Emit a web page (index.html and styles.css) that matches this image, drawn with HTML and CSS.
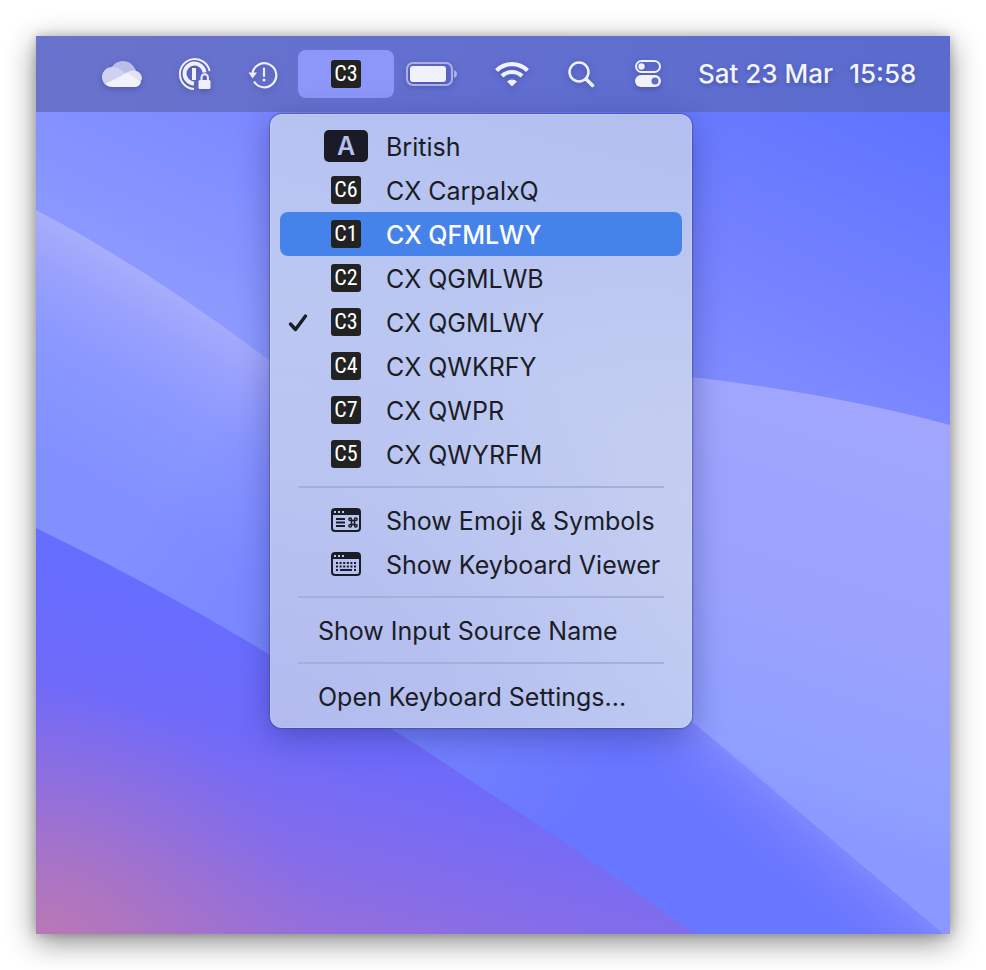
FILE: index.html
```html
<!DOCTYPE html>
<html lang="en">
<head>
<meta charset="utf-8">
<title>Input menu</title>
<link rel="stylesheet" href="styles.css">
</head>
<body>
<main class="desktop">
  <svg class="wallpaper" viewBox="36 36 914 898" preserveAspectRatio="none" aria-hidden="true">
    <defs>
      <linearGradient id="sky" gradientUnits="userSpaceOnUse" x1="950" y1="80" x2="720" y2="560">
        <stop offset="0" stop-color="#5a70ff"/><stop offset=".55" stop-color="#7985ff"/><stop offset="1" stop-color="#8c9aff"/>
      </linearGradient>
      <linearGradient id="wave" gradientUnits="userSpaceOnUse" x1="200" y1="296" x2="92" y2="484">
        <stop offset="0" stop-color="#a9b0fb"/><stop offset=".22" stop-color="#9aa2fd"/><stop offset=".5" stop-color="#8b98ff"/><stop offset="1" stop-color="#8090ff"/>
      </linearGradient>
      <linearGradient id="waveTail" gradientUnits="userSpaceOnUse" x1="160" y1="500" x2="580" y2="800">
        <stop offset="0" stop-color="#6873ff" stop-opacity="0"/><stop offset=".5" stop-color="#7382ff" stop-opacity=".7"/><stop offset="1" stop-color="#6976ff"/>
      </linearGradient>
      <linearGradient id="tailGlow" gradientUnits="userSpaceOnUse" x1="820" y1="828" x2="775" y2="882">
        <stop offset="0" stop-color="#8088ff"/><stop offset="1" stop-color="#6a76ff" stop-opacity="0"/>
      </linearGradient>
      <linearGradient id="sail" gradientUnits="userSpaceOnUse" x1="880" y1="390" x2="740" y2="800">
        <stop offset="0" stop-color="#a2a6fd"/><stop offset=".55" stop-color="#9aa2fd"/><stop offset=".9" stop-color="#8f9fff"/><stop offset="1" stop-color="#8b98ff"/>
      </linearGradient>
      <linearGradient id="floor" gradientUnits="userSpaceOnUse" x1="270" y1="600" x2="170" y2="990">
        <stop offset="0" stop-color="#656eff"/><stop offset=".32" stop-color="#6f6afa"/><stop offset=".62" stop-color="#866de8"/><stop offset="1" stop-color="#ab72c6"/>
      </linearGradient>
      <radialGradient id="ember" gradientUnits="userSpaceOnUse" cx="36" cy="980" r="290">
        <stop offset="0" stop-color="#c27aae"/><stop offset=".5" stop-color="#b276bb" stop-opacity=".5"/><stop offset="1" stop-color="#a070cc" stop-opacity="0"/>
      </radialGradient>
    </defs>
    <path fill="url(#sky)" d="M36 36H950V934H36z"/>
    <path fill="url(#wave)" d="M36 210Q150 270 270 361Q520 540 692 722L943 934H36z"/>
    <path fill="url(#waveTail)" d="M36 210Q150 270 270 361Q520 540 692 722L943 934H36z"/>
    <path fill="url(#tailGlow)" d="M600 640L692 722L943 934H560z"/>
    <path fill="url(#sail)" d="M300 370Q500 350 692 377Q840 395 950 425V934H943Q820 820 692 722Q480 540 300 370z"/>
    <path fill="url(#floor)" d="M36 528Q160 588 270 655Q390 725 480 787Q590 858 695 934H36z"/>
    <path fill="url(#ember)" d="M36 680H340V934H36z"/>
  </svg>

  <header class="menubar">
    <button class="extra cloud" aria-label="OneDrive">
      <svg width="42" height="28" viewBox="0 0 42 28"><path fill="#b9bde8" d="M9 14C9 6 15 1 22 1c6 0 11 4 13 10L20 19z"/><path fill="#ced1f0" d="M20 20L10 26C4 26 1 22 1 17c0-5 4-10 10-10 4 0 7 1 9 3l13 9z"/><path fill="#e2e3f5" d="M20 15l9-4c7-2 12 2 12 8l-3 5z"/><path fill="#f1f2fc" d="M4 24l22-11 14 9c-1 3-3 5-7 5H11c-3 0-5-1-7-3z"/></svg>
    </button>
    <button class="extra vault" aria-label="1Password">
      <svg width="34" height="34" viewBox="0 0 34 34" fill="none" stroke="#eff0fb"><path stroke-width="2" d="M16 32A15 15 0 1 1 31.600 14"/><path stroke-width="4" d="M16 26.500A10 10 0 1 1 26.500 15.500"/><path stroke-width="4" d="M16 11V23"/><rect x="20.500" y="23" width="12" height="9" rx="1.500" fill="#eff0fb" stroke="none"/><path stroke-width="2" d="M23.500 24v-3.500a3.200 3.200 0 0 1 6.400 0V24"/></svg>
    </button>
    <button class="extra backup" aria-label="Time Machine">
      <svg width="30" height="30" viewBox="0 0 30 30" fill="none" stroke="#eff0fb" stroke-width="2.200"><path d="M4.500 14A12 12 0 1 1 6 22.500"/><path fill="#eff0fb" stroke="none" d="M.500 13.500h8.500l-4.500 6z"/><path stroke-linecap="round" d="M16 9.500v7.500"/><circle cx="16" cy="21" r="1.500" fill="#eff0fb" stroke="none"/></svg>
    </button>

    <div class="input-source">
      <button class="extra source-button" aria-haspopup="menu" aria-expanded="true"><span class="badge">C3</span></button>
      <div class="menu" role="menu">
        <button class="item" role="menuitem"><span class="check"></span><span class="icon"><span class="letter">A</span></span><span class="label">British</span></button>
        <button class="item" role="menuitem"><span class="check"></span><span class="icon"><span class="badge">C6</span></span><span class="label">CX CarpalxQ</span></button>
        <button class="item selected" role="menuitem"><span class="check"></span><span class="icon"><span class="badge">C1</span></span><span class="label">CX QFMLWY</span></button>
        <button class="item" role="menuitem"><span class="check"></span><span class="icon"><span class="badge">C2</span></span><span class="label">CX QGMLWB</span></button>
        <button class="item" role="menuitem"><span class="check"><svg width="20" height="22" viewBox="0 0 20 22" fill="none" stroke="#1b1d26" stroke-width="3.400" stroke-linecap="round" stroke-linejoin="round"><path d="M2.500 13l5 5.500L17.500 5"/></svg></span><span class="icon"><span class="badge">C3</span></span><span class="label">CX QGMLWY</span></button>
        <button class="item" role="menuitem"><span class="check"></span><span class="icon"><span class="badge">C4</span></span><span class="label">CX QWKRFY</span></button>
        <button class="item" role="menuitem"><span class="check"></span><span class="icon"><span class="badge">C7</span></span><span class="label">CX QWPR</span></button>
        <button class="item" role="menuitem"><span class="check"></span><span class="icon"><span class="badge">C5</span></span><span class="label">CX QWYRFM</span></button>
        <hr class="rule">
        <button class="item" role="menuitem"><span class="check"></span><span class="icon"><svg width="30" height="24" viewBox="0 0 30 24" fill="none" stroke="#1b1d26" stroke-width="2"><rect x="1" y="1" width="28" height="22" rx="3"/><path fill="#1b1d26" stroke="none" d="M1 3a2 2 0 0 1 2-2h24a2 2 0 0 1 2 2v4H1z"/><path stroke="#bcc9f2" d="M3 4h2M7 4h2M11 4h2"/><path stroke-width="1.800" d="M5 11h9M5 14.500h9M5 18h9"/><path stroke-width="1.500" d="M20.500 12.500h3v4h-3zM20.500 12.500h-1.300a1.300 1.300 0 1 1 1.300-1.300zM23.500 12.500h1.300a1.300 1.300 0 1 0-1.300-1.300zM20.500 16.500h-1.300a1.300 1.300 0 1 0 1.300 1.300zM23.500 16.500h1.300a1.300 1.300 0 1 1-1.300 1.300z"/></svg></span><span class="label">Show Emoji &amp; Symbols</span></button>
        <button class="item" role="menuitem"><span class="check"></span><span class="icon"><svg width="30" height="24" viewBox="0 0 30 24" fill="none" stroke="#1b1d26" stroke-width="2"><rect x="1" y="1" width="28" height="22" rx="3"/><path fill="#1b1d26" stroke="none" d="M1 3a2 2 0 0 1 2-2h24a2 2 0 0 1 2 2v4H1z"/><path stroke="#bcc9f2" d="M3 4h2M7 4h2M11 4h2"/><path stroke-dasharray="2 1.600" d="M5 11h20M5 14.500h20"/><path d="M5 18h2M9 18h12M23 18h2"/></svg></span><span class="label">Show Keyboard Viewer</span></button>
        <hr class="rule">
        <button class="item" role="menuitem"><span class="check"></span><span class="label">Show Input Source Name</span></button>
        <hr class="rule">
        <button class="item" role="menuitem"><span class="check"></span><span class="label">Open Keyboard Settings...</span></button>
      </div>
    </div>

    <button class="extra battery" aria-label="Battery">
      <svg width="52" height="26" viewBox="0 0 52 26"><rect x="1" y="2" width="45" height="22" rx="6" fill="none" stroke="#aab0e6" stroke-width="2"/><rect x="4" y="5" width="36" height="16" rx="3" fill="#f0f1fb"/><path fill="#aab0e6" d="M48 9c2 1 3 2 3 4s-1 3-3 4z"/></svg>
    </button>
    <button class="extra wifi" aria-label="Wi-Fi">
      <svg width="36" height="26" viewBox="0 0 36 26" fill="none" stroke="#f0f1fb" stroke-width="4.200"><path d="M2.500 9.500a22 22 0 0 1 31 0"/><path d="M8 15a14.500 14.500 0 0 1 20 0"/><path fill="#f0f1fb" stroke="none" d="M18 25.500l-5-5a7 7 0 0 1 10 0z"/></svg>
    </button>
    <button class="extra search" aria-label="Search">
      <svg width="28" height="28" viewBox="0 0 28 28" fill="none" stroke="#f0f1fb"><circle cx="12" cy="12" r="9.500" stroke-width="2.500"/><path stroke-width="3.500" stroke-linecap="round" d="M19 19l6.500 6.500"/></svg>
    </button>
    <button class="extra controls" aria-label="Control Centre">
      <svg width="28" height="28" viewBox="0 0 28 28"><rect x="2" y="1" width="24" height="11" rx="5.500" fill="none" stroke="#f0f1fb" stroke-width="2"/><circle cx="7.500" cy="6.500" r="3.200" fill="#f0f1fb"/><rect x="1" y="15" width="26" height="12" rx="6" fill="#f0f1fb"/><circle cx="21" cy="21" r="3.500" fill="#5d6dcf"/></svg>
    </button>
    <button class="extra clock"><span>Sat 23 Mar</span><span>15:58</span></button>
  </header>
</main>
</body>
</html>
```

FILE: styles.css
```css
* { box-sizing: border-box; }

body {
  margin: 0;
  padding: 36px;
  min-height: 100vh;
  display: flex;
  background: #fff;
  font-family: Inter, "Liberation Sans", sans-serif;
  overflow: hidden;
}

button {
  border: 0;
  margin: 0;
  padding: 0;
  background: none;
  color: inherit;
  font: inherit;
  text-align: left;
}

.desktop {
  position: relative;
  flex: 1;
  box-shadow: 0 8px 28px rgba(0, 0, 0, .45), 0 0 10px rgba(0, 0, 0, .2);
}

.wallpaper {
  position: absolute;
  inset: 0;
  width: 100%;
  height: 100%;
}

.menubar {
  position: relative;
  display: flex;
  justify-content: flex-end;
  align-items: center;
  height: 76px;
  background: linear-gradient(90deg, #6a73cc, #626fd0 50%, #5a6bcd);
}

.extra {
  display: flex;
  align-items: center;
  justify-content: center;
  height: 48px;
}

.extra svg { filter: drop-shadow(0 2px 3px rgba(30, 35, 110, .35)); }

.cloud { width: 72px; }
.vault { width: 74px; }
.backup { width: 62px; }
.battery { width: 76px; }
.wifi { width: 84px; }
.search { width: 54px; }
.controls { width: 80px; }

.clock {
  width: 262px;
  padding: 0 0 2px 10px;
  justify-content: flex-start;
  gap: 16px;
  color: #f2f3fc;
  font-size: 26px;
  font-weight: 500;
  white-space: nowrap;
  text-shadow: 0 2px 4px rgba(30, 35, 110, .35);
}

.input-source {
  position: relative;
  margin-left: 4px;
}

.source-button {
  width: 96px;
  border-radius: 8px;
  background: #8c97f9;
}

.badge {
  display: flex;
  align-items: center;
  justify-content: center;
  width: 30px;
  height: 28px;
  border-radius: 3px;
  background: #222;
  color: #fff;
  font-family: "Liberation Sans Narrow", "Roboto Condensed", Roboto, sans-serif;
  font-size: 22px;
  font-weight: 400;
  line-height: 28px;
}

.menu {
  position: absolute;
  top: 64px;
  left: -28px;
  width: 422px;
  padding: 10px;
  border-radius: 12px;
  background:
    radial-gradient(circle at 0 100%, #b3bbee, rgba(179, 187, 238, 0) 60%),
    radial-gradient(circle at 100% 62%, #c5cef1, rgba(197, 206, 241, 0) 55%),
    linear-gradient(195deg, #b3bff0 0%, #bbc8f2 40%, #becbf2 65%, #b8c6f3 100%);
  box-shadow: 0 0 1px 1px rgba(50, 55, 140, .45), 0 8px 32px rgba(30, 35, 110, .4), inset 0 0 0 1px rgba(255, 255, 255, .15);
  color: #1b1d26;
  font-size: 25px;
}

.item {
  display: flex;
  align-items: center;
  width: 100%;
  height: 44px;
  padding-left: 8px;
  border-radius: 8px;
  white-space: nowrap;
}

.label { padding-top: 2px; }

.selected {
  background: #4583ea;
  color: #fff;
}

.selected .label { font-weight: 500; }

.check {
  display: flex;
  width: 30px;
}

.icon {
  display: flex;
  justify-content: center;
  width: 56px;
  margin-right: 12px;
}

.letter {
  width: 44px;
  height: 32px;
  border-radius: 5px;
  background: #1a1b27;
  color: #b7c0ef;
  font-size: 25px;
  font-weight: 600;
  line-height: 32px;
  text-align: center;
}

.rule {
  height: 2px;
  margin: 10px 18px;
  border: 0;
  background: #a5b0d9;
}
```
